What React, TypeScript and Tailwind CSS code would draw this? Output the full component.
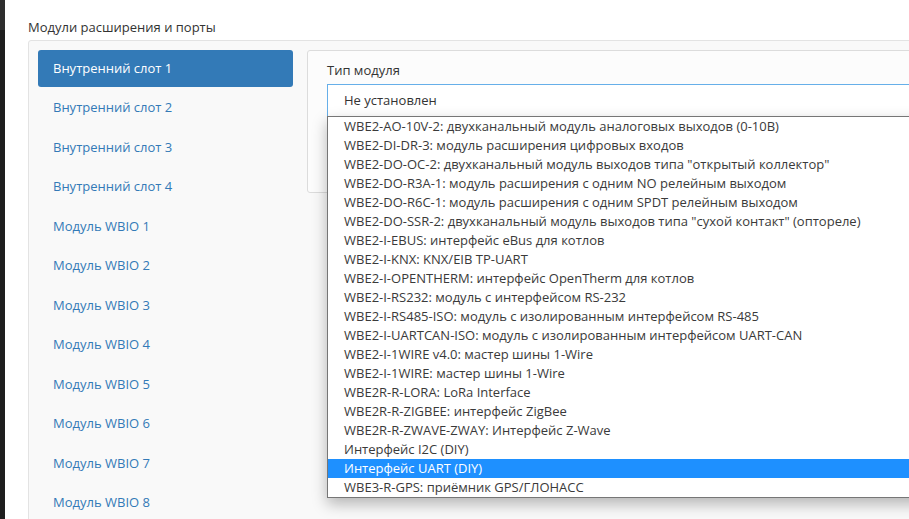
import React from "react";

const slots = [
  "Внутренний слот 1",
  "Внутренний слот 2",
  "Внутренний слот 3",
  "Внутренний слот 4",
  "Модуль WBIO 1",
  "Модуль WBIO 2",
  "Модуль WBIO 3",
  "Модуль WBIO 4",
  "Модуль WBIO 5",
  "Модуль WBIO 6",
  "Модуль WBIO 7",
  "Модуль WBIO 8",
];

const options = [
  "WBE2-AO-10V-2: двухканальный модуль аналоговых выходов (0-10В)",
  "WBE2-DI-DR-3: модуль расширения цифровых входов",
  'WBE2-DO-OC-2: двухканальный модуль выходов типа "открытый коллектор"',
  "WBE2-DO-R3A-1: модуль расширения с одним NO релейным выходом",
  "WBE2-DO-R6C-1: модуль расширения с одним SPDT релейным выходом",
  'WBE2-DO-SSR-2: двухканальный модуль выходов типа "сухой контакт" (оптореле)',
  "WBE2-I-EBUS: интерфейс eBus для котлов",
  "WBE2-I-KNX: KNX/EIB TP-UART",
  "WBE2-I-OPENTHERM: интерфейс OpenTherm для котлов",
  "WBE2-I-RS232: модуль с интерфейсом RS-232",
  "WBE2-I-RS485-ISO: модуль с изолированным интерфейсом RS-485",
  "WBE2-I-UARTCAN-ISO: модуль с изолированным интерфейсом UART-CAN",
  "WBE2-I-1WIRE v4.0: мастер шины 1-Wire",
  "WBE2-I-1WIRE: мастер шины 1-Wire",
  "WBE2R-R-LORA: LoRa Interface",
  "WBE2R-R-ZIGBEE: интерфейс ZigBee",
  "WBE2R-R-ZWAVE-ZWAY: Интерфейс Z-Wave",
  "Интерфейс I2C (DIY)",
  "Интерфейс UART (DIY)",
  "WBE3-R-GPS: приёмник GPS/ГЛОНАСС",
];

export default function App() {
  const active = 0;
  const highlighted = 18;

  return (
    <div
      className="flex h-[519px] w-[909px] overflow-hidden bg-white text-[#333]"
      style={{ fontFamily: '"Open Sans", "Noto Sans", sans-serif' }}
    >
      {/* dark edge of the host window */}
      <div className="flex w-[5px] shrink-0 flex-col">
        <div className="h-[30px] bg-[#2e2e2e]" />
        <div className="flex-1 bg-[#1e1e1e]" />
      </div>

      <div className="shrink-0 pl-[23px] pt-[18px]">
        <h2 className="mb-[4px] h-[18px] text-[13px] leading-[18px] font-normal">
          Модули расширения и порты
        </h2>

        <div className="flex w-[920px] gap-[14px] rounded-tl-[3px] border border-[#e3e3e3] bg-[#f9f9f9] p-[9px]">
          <ul className="flex w-[255px] shrink-0 flex-col gap-[2.5px]">
            {slots.map((s, i) => (
              <li
                key={s}
                className={
                  i === active
                    ? "flex h-[37px] items-center rounded-[3px] bg-[#337ab7] px-[15px] text-[13px] text-white"
                    : "flex h-[37px] items-center px-[15px] text-[13px] text-[#337ab7]"
                }
              >
                {s}
              </li>
            ))}
          </ul>

          <div className="h-[143px] flex-1 self-start rounded-[3px] border border-[#dcdcdc] bg-[#fcfcfc] px-[19px] pt-[8px]">
            <label className="block h-[22px] text-[13px] leading-[22px]">Тип модуля</label>
            <div className="relative mt-[3px]">
              <div className="flex h-[33px] items-center border border-[#66afe9] bg-white px-[16px] text-[13px]">
                Не установлен
              </div>

              <ul className="absolute left-0 top-[32px] z-10 w-[620px] border border-[#767676] bg-white shadow-[0_6px_14px_rgba(0,0,0,0.28)]">
                {options.map((o, i) => (
                  <li
                    key={o}
                    className={
                      i === highlighted
                        ? "h-[19px] whitespace-nowrap bg-[#1e90ff] px-[16px] text-[13px] leading-[19px] text-white"
                        : "h-[19px] whitespace-nowrap px-[16px] text-[13px] leading-[19px] text-[#3a3a3a]"
                    }
                  >
                    {o}
                  </li>
                ))}
              </ul>
            </div>
          </div>
        </div>
      </div>
    </div>
  );
}
